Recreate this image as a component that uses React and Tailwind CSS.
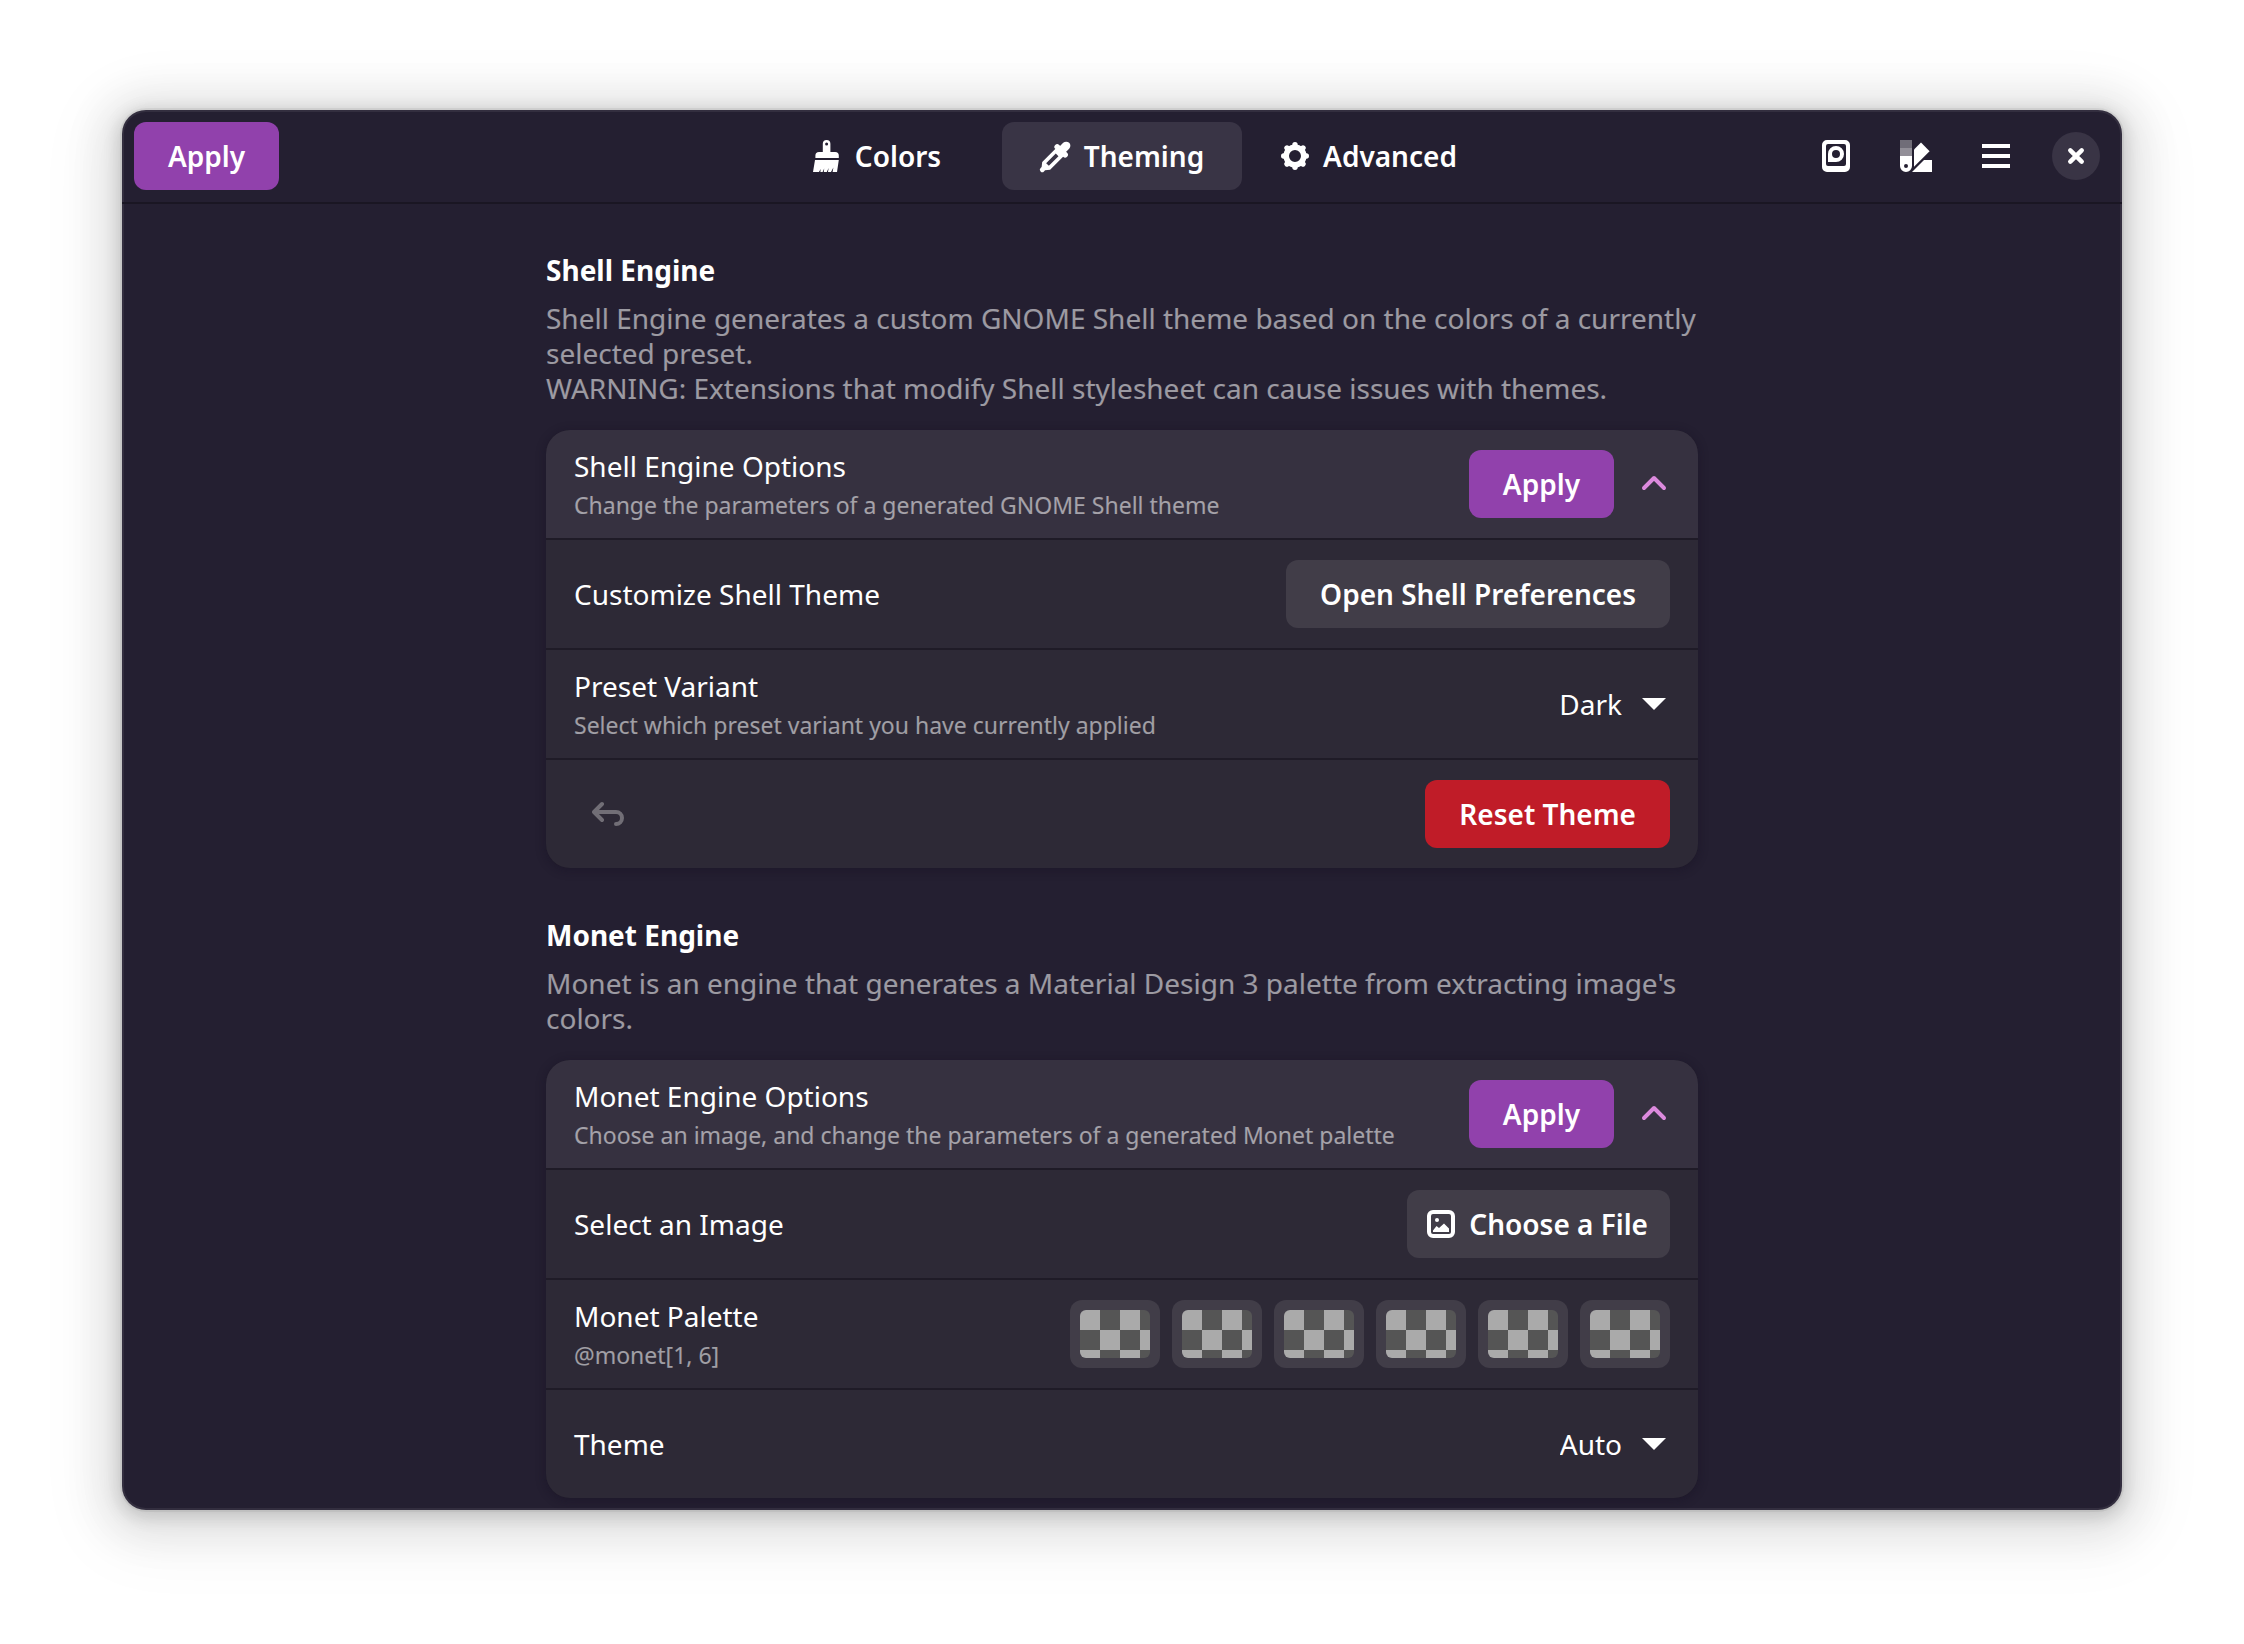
import React from "react";

/* ---------- icons ---------- */

function Icon({ children, className = "" }) {
  return (
    <svg viewBox="0 0 32 32" className={`size-8 shrink-0 ${className}`} fill="currentColor" aria-hidden="true">
      {children}
    </svg>
  );
}

const BrushIcon = () => (
  <Icon>
    <path
      fillRule="evenodd"
      d="M11.8 3.8a3.8 3.8 0 0 1 7.6 0V12h4.800a3.600 3.600 0 0 1 3.600 3.600V18H4.400v-2.400A3.600 3.600 0 0 1 8 12h3.800V3.800Zm3.800 1.700a1.500 1.500 0 1 0 0-3 1.500 1.500 0 0 0 0 3Z"
    />
    <path d="M4 20h23.800l-1.800 12h-4.400l.8-4.500-2.400 4.500h-3l.6-4-1.800 4h-3l.4-3.500-1.600 3.500H9.400l.2-3L8 32H2L4 20Z" />
  </Icon>
);

const DropperIcon = () => (
  <Icon className="overflow-visible">
    <g transform="translate(15 17) rotate(45)">
      <rect x="-4.200" y="-20" width="8.400" height="15" rx="4.200" />
      <rect x="-8.400" y="-11.500" width="16.800" height="5.600" rx="2.800" />
      <path
        fillRule="evenodd"
        d="M-5.600-8H5.600V12.500L2.400 16.500V18a2.400 2.400 0 0 1-4.800 0V16.500L-5.600 12.500ZM-1.900-3V10.600H1.900V-3Z"
      />
    </g>
  </Icon>
);

const GearIcon = () => (
  <Icon>
    <circle cx="16" cy="16" r="8.800" fill="none" stroke="currentColor" strokeWidth="5.600" />
    <path
      fill="none"
      stroke="currentColor"
      strokeWidth="5.400"
      strokeLinecap="round"
      d="M16 4.700v2M16 25.300v2M4.700 16h2M25.300 16h2M8 8l1.400 1.400M22.600 22.600 24 24M8 24l1.400-1.400M22.600 9.400 24 8"
    />
  </Icon>
);

const PresetIcon = () => (
  <Icon>
    <path fillRule="evenodd" d="M7 0h18a5 5 0 0 1 5 5v22a5 5 0 0 1-5 5H7a5 5 0 0 1-5-5V5a5 5 0 0 1 5-5Zm1 4a2 2 0 0 0-2 2v18a2 2 0 0 0 2 2h16a2 2 0 0 0 2-2V6a2 2 0 0 0-2-2H8Z" />
    <path fillRule="evenodd" d="M16 6a8 8 0 1 1 0 16H8v-8a8 8 0 0 1 8-8Zm0 4a4 4 0 1 0 0 8 4 4 0 0 0 0-8Z" />
  </Icon>
);

const PaletteIcon = () => (
  <Icon>
    <path opacity=".35" d="M0 0h12v8H0z" />
    <path opacity=".5" d="M0 8h12v8H0z" />
    <path fillRule="evenodd" d="M0 16h12v10a6 6 0 0 1-12 0V16Zm6 8a2 2 0 1 0 0 4 2 2 0 0 0 0-4Z" />
    <path d="M14 9.500 21 2.500l8.600 8.700L14 26.700z" />
    <path d="M24 20h8v12H12z" />
  </Icon>
);

const MenuIcon = () => (
  <Icon>
    <path d="M2 4h28v4H2zM2 14h28v4H2zM2 24h28v4H2z" />
  </Icon>
);

const CloseIcon = () => (
  <Icon>
    <path fill="none" stroke="currentColor" strokeWidth="4.500" strokeLinecap="round" d="m10.300 10.300 11.400 11.400M21.700 10.300 10.300 21.700" />
  </Icon>
);

const ChevronUpIcon = () => (
  <Icon className="text-[#dc8add]">
    <path fill="none" stroke="currentColor" strokeWidth="4" strokeLinecap="round" strokeLinejoin="round" d="m6 20 10-10 10 10" />
  </Icon>
);

const ArrowDownIcon = () => (
  <Icon className="pointer-events-none">
    <path d="M4 10h24L16 22z" />
  </Icon>
);

const UndoIcon = () => (
  <Icon>
    <path fill="none" stroke="currentColor" strokeWidth="4" strokeLinecap="round" strokeLinejoin="round" d="M10 6 2 14l8 8M3 14h21a6 6 0 0 1 0 12" />
  </Icon>
);

const ImageIcon = () => (
  <Icon>
    <rect x="4" y="4" width="24" height="24" rx="4" fill="none" stroke="currentColor" strokeWidth="4" />
    <circle cx="12" cy="12" r="2" />
    <path d="M8 22.500 11.500 18l2.500 2 5-4.500 5 5V24H8z" />
  </Icon>
);

/* ---------- controls ---------- */

const variants = {
  accent: "bg-[#9141ac] px-[34px]",
  plain: "bg-[#413d48] px-[34px]",
  danger: "bg-[#c01c28] px-[34px]",
  file: "bg-[#413d48] pl-[18px] pr-[22px]",
};

function Button({ variant, children }) {
  return (
    <button
      type="button"
      className={`flex h-[68px] shrink-0 items-center gap-3 rounded-xl font-semibold ${variants[variant]}`}
    >
      {children}
    </button>
  );
}

function IconButton({ label, disabled, children }) {
  return (
    <button
      type="button"
      aria-label={label}
      disabled={disabled}
      className="flex size-[68px] items-center justify-center rounded-xl disabled:text-[#716e76]"
    >
      {children}
    </button>
  );
}

function Tab({ icon, label, selected }) {
  return (
    <button
      type="button"
      role="tab"
      aria-selected={selected}
      className="flex h-[68px] w-60 items-center justify-center gap-3 rounded-xl font-semibold aria-selected:bg-[#393445]"
    >
      {icon}
      {label}
    </button>
  );
}

function Dropdown({ id, options }) {
  return (
    <div className="flex items-center gap-4">
      <select id={id} className="appearance-none bg-transparent text-right outline-none [field-sizing:content]">
        {options.map((o) => (
          <option key={o} className="bg-[#2d2936]">
            {o}
          </option>
        ))}
      </select>
      <ArrowDownIcon />
    </div>
  );
}

/* ---------- layout ---------- */

function Row({ title, subtitle, htmlFor, header, children }) {
  const Title = htmlFor ? "label" : "div";
  return (
    <div
      className={`flex min-h-[108px] items-center justify-between gap-6 px-7 ${
        header ? "bg-[#363140]" : "bg-[#2d2936]"
      }`}
    >
      {title && (
        <div className="flex flex-col gap-1.5">
          <Title htmlFor={htmlFor}>{title}</Title>
          {subtitle && <div className="text-[23px] leading-[30px] text-white/55">{subtitle}</div>}
        </div>
      )}
      {children}
    </div>
  );
}

function Section({ title, description, children }) {
  return (
    <section>
      <h2 className="font-bold">{title}</h2>
      <p className="mt-[13px] whitespace-pre-line text-white/55">{description}</p>
      <div className="mt-6 flex flex-col gap-0.5 overflow-hidden rounded-3xl bg-[#1f1b27] shadow-[0_2px_8px_2px_rgba(20,14,34,0.3)]">
        {children}
      </div>
    </section>
  );
}

export default function App() {
  return (
    <div className="min-h-screen bg-white px-[122px] pt-[110px] pb-[134px] font-['Noto_Sans',sans-serif] text-[28px] leading-[35px] font-[375] text-white">
      <div className="rounded-3xl bg-[#241f31] shadow-[inset_0_0_0_2px_rgba(255,255,255,0.07),0_0_0_2px_rgba(0,0,0,0.05),0_4px_16px_4px_rgba(0,0,0,0.13),0_6px_40px_20px_rgba(0,0,0,0.09),0_12px_64px_32px_rgba(0,0,0,0.04)]">
        <header className="grid grid-cols-[1fr_auto_1fr] items-center border-b-2 border-[#1a1623] p-3">
          <div className="flex">
            <Button variant="accent">Apply</Button>
          </div>
          <div role="tablist" className="flex gap-1.5">
            <Tab icon={<BrushIcon />} label="Colors" selected={false} />
            <Tab icon={<DropperIcon />} label="Theming" selected />
            <Tab icon={<GearIcon />} label="Advanced" selected={false} />
          </div>
          <div className="flex justify-end gap-3">
            <IconButton label="Presets">
              <PresetIcon />
            </IconButton>
            <IconButton label="Palette">
              <PaletteIcon />
            </IconButton>
            <IconButton label="Main menu">
              <MenuIcon />
            </IconButton>
            <IconButton label="Close">
              <span className="flex size-12 items-center justify-center rounded-full bg-[#393445]">
                <CloseIcon />
              </span>
            </IconButton>
          </div>
        </header>

        <main className="mx-auto flex max-w-6xl flex-col gap-[50px] pt-[49px] pb-3">
          <Section
            title="Shell Engine"
            description={
              "Shell Engine generates a custom GNOME Shell theme based on the colors of a currently selected preset.\nWARNING: Extensions that modify Shell stylesheet can cause issues with themes."
            }
          >
            <Row header title="Shell Engine Options" subtitle="Change the parameters of a generated GNOME Shell theme">
              <div className="flex items-center gap-6">
                <Button variant="accent">Apply</Button>
                <button type="button" aria-label="Collapse Shell Engine Options" aria-expanded="true">
                  <ChevronUpIcon />
                </button>
              </div>
            </Row>
            <Row title="Customize Shell Theme">
              <Button variant="plain">Open Shell Preferences</Button>
            </Row>
            <Row
              title="Preset Variant"
              subtitle="Select which preset variant you have currently applied"
              htmlFor="preset-variant"
            >
              <Dropdown id="preset-variant" options={["Dark", "Light"]} />
            </Row>
            <Row>
              <IconButton label="Undo" disabled>
                <UndoIcon />
              </IconButton>
              <Button variant="danger">Reset Theme</Button>
            </Row>
          </Section>

          <Section
            title="Monet Engine"
            description="Monet is an engine that generates a Material Design 3 palette from extracting image's colors."
          >
            <Row
              header
              title="Monet Engine Options"
              subtitle="Choose an image, and change the parameters of a generated Monet palette"
            >
              <div className="flex items-center gap-6">
                <Button variant="accent">Apply</Button>
                <button type="button" aria-label="Collapse Monet Engine Options" aria-expanded="true">
                  <ChevronUpIcon />
                </button>
              </div>
            </Row>
            <Row title="Select an Image">
              <Button variant="file">
                <ImageIcon />
                Choose a File
              </Button>
            </Row>
            <Row title="Monet Palette" subtitle="@monet[1, 6]">
              <div className="flex gap-3">
                {[1, 2, 3, 4, 5, 6].map((n) => (
                  <button
                    key={n}
                    type="button"
                    aria-label={`Monet color ${n}`}
                    className="h-[68px] w-[90px] rounded-xl bg-[#413d48] p-2.5"
                  >
                    <span className="block h-12 rounded-md bg-[repeating-conic-gradient(#555555_0_25%,#aaaaaa_0_50%)] bg-[length:40px_40px]" />
                  </button>
                ))}
              </div>
            </Row>
            <Row title="Theme" htmlFor="monet-theme">
              <Dropdown id="monet-theme" options={["Auto", "Light", "Dark"]} />
            </Row>
          </Section>
        </main>
      </div>
    </div>
  );
}
